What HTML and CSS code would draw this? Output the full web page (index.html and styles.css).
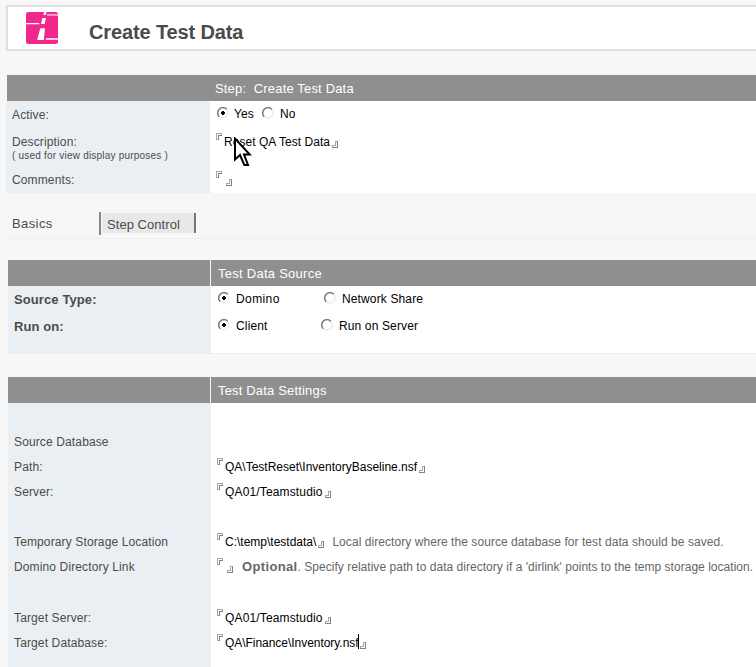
FILE: index.html
```html
<!DOCTYPE html>
<html lang="en">
<head>
<meta charset="utf-8">
<title>Create Test Data</title>
<link rel="stylesheet" href="styles.css">
</head>
<body>
<svg class="defs" aria-hidden="true">
  <symbol id="open" viewBox="0 0 6 7"><path d="M0 0H6V1H1V7H0Z" fill="#a8a8a8"/><path d="M2 2H6V3H3V7H2Z" fill="#808080"/><path d="M5 1H6V2H5ZM1 6H2V7H1Z" fill="#a8a8a8"/></symbol>
  <symbol id="close" viewBox="0 0 6 7"><path d="M3 0H4V5H0V4H3Z" fill="#a8a8a8"/><path d="M5 0H6V7H0V6H5Z" fill="#808080"/><path d="M4 0H5V1H4ZM0 5H1V6H0Z" fill="#a8a8a8"/></symbol>
  <symbol id="radio" viewBox="0 0 12 12"><circle cx="6" cy="6" r="5" fill="#fff" stroke="#e2e2e2"/><path d="M2.2 9.8A5.3 5.3 0 0 1 9.8 2.2" fill="none" stroke="#777" stroke-width="1.4"/></symbol>
  <symbol id="radio-on" viewBox="0 0 12 12"><use href="#radio"/><path d="M5 4H7V5H8V7H7V8H5V7H4V5H5Z" fill="#000"/></symbol>
</svg>

<header class="banner">
  <svg class="logo" viewBox="0 0 32 32"><rect width="32" height="32" rx="2.5" fill="#f0288c"/><path d="M18.2 0H20.6L19.7 3H17.4ZM16.5 6H20L18.6 12H15ZM14.3 16.3H19L17.8 28H11.2Z" fill="#fff"/><path d="M0 11H13.3V12.3H0ZM20 26.3H32V27.8H19.7Z" fill="#fff"/><path d="M21 2H32V3.8H21Z" fill="#f9a5cf"/></svg>
  <h1>Create Test Data</h1>
</header>

<section class="panel step">
  <div class="head"></div><div class="head title"><span class="t-step">Step:&nbsp; Create Test Data</span></div>
  <div class="labels">
    <div class="row r-active">Active:</div>
    <div class="row r-desc">Description:</div>
    <div class="row r-hint">( used for view display purposes )</div>
    <div class="row r-comm">Comments:</div>
  </div>
  <div class="values">
    <div class="radios"><svg class="radio"><use href="#radio-on"/></svg><span class="yes">Yes</span><svg class="radio"><use href="#radio"/></svg><span class="no">No</span></div>
    <div class="field v-desc"><svg class="open"><use href="#open"/></svg><span class="t-reset">Reset QA Test Data</span><svg class="close"><use href="#close"/></svg></div>
    <div class="field v-comm"><svg class="open"><use href="#open"/></svg><svg class="close"><use href="#close"/></svg></div>
  </div>
</section>

<nav class="tabs"><span class="basics">Basics</span><span class="edge"></span><span class="control">Step Control</span></nav>

<section class="panel source">
  <div class="head"></div><div class="head title"><span class="t-source">Test Data Source</span></div>
  <div class="labels bold">
    <div class="row">Source Type:</div>
    <div class="row">Run on:</div>
  </div>
  <div class="values">
    <div class="radios"><svg class="radio"><use href="#radio-on"/></svg><span class="first">Domino</span><svg class="radio"><use href="#radio"/></svg><span class="choice">Network Share</span></div>
    <div class="radios"><svg class="radio"><use href="#radio-on"/></svg><span class="first second">Client</span><svg class="radio"><use href="#radio"/></svg><span class="choice">Run on Server</span></div>
  </div>
</section>

<section class="panel settings">
  <div class="head"></div><div class="head title"><span class="t-settings">Test Data Settings</span></div>
  <div class="labels">
    <div class="row">Source Database</div>
    <div class="row">Path:</div>
    <div class="row">Server:</div>
    <div class="row gap">Temporary Storage Location</div>
    <div class="row">Domino Directory Link</div>
    <div class="row gap more">Target Server:</div>
    <div class="row">Target Database:</div>
  </div>
  <div class="values">
    <div class="field after"><svg class="open"><use href="#open"/></svg><span class="t-path">QA\TestReset\InventoryBaseline.nsf</span><svg class="close"><use href="#close"/></svg></div>
    <div class="field"><svg class="open"><use href="#open"/></svg><span class="t-qa">QA01/Teamstudio</span><svg class="close"><use href="#close"/></svg></div>
    <div class="field gap"><svg class="open"><use href="#open"/></svg><span class="t-temp">C:\temp\testdata\</span><svg class="close"><use href="#close"/></svg><span class="note t-local">Local directory where the source database for test data should be saved.</span></div>
    <div class="field"><svg class="open"><use href="#open"/></svg><svg class="close"><use href="#close"/></svg><span class="note t-opt"><b>Optional</b>. Specify relative path to data directory if a 'dirlink' points to the temp storage location.</span></div>
    <div class="field gap more"><svg class="open"><use href="#open"/></svg><span class="t-qa">QA01/Teamstudio</span><svg class="close"><use href="#close"/></svg></div>
    <div class="field"><svg class="open"><use href="#open"/></svg><span class="t-inv">QA\Finance\Inventory.nsf</span><i class="caret"></i><svg class="close"><use href="#close"/></svg></div>
  </div>
</section>

<svg class="cursor" viewBox="0 0 18 30"><path d="M1 1.5V22.5L6 18L10.3 28H14L10 17.5H15.8Z" fill="#fff" stroke="#000" stroke-width="2"/></svg>
</body>
</html>
```

FILE: styles.css
```css
* { box-sizing: border-box; }
html, body { height: 667px; overflow: hidden; }
body { margin: 0; padding: 5px 0 0 7px; background: #f7f7f7; color: #4b4b4b; font: 12px/25px "Liberation Sans", Arial, sans-serif; white-space: nowrap; }
svg { display: block; flex: none; }
.defs { position: absolute; width: 0; height: 0; }

.banner { display: flex; height: 46px; margin-left: -1px; border: 2px solid #dfdfdf; border-right: 0; background: #fff; }
.logo { width: 32px; height: 32px; margin: 5px 31px 0 18px; }
h1 { margin: 0; padding-top: 12px; font-size: 20px; line-height: 26px; letter-spacing: -.13px; }

.panel { display: grid; grid-template-columns: 203px 1fr; grid-template-rows: 26px 1fr; }
.head { background: #8f8f8f; }
.title { color: #fff; font-size: 13px; line-height: 27px; padding-left: 5px; }
.t-step, .t-settings { letter-spacing: .17px; }
.t-source { letter-spacing: .26px; }
.labels { background: #eaeff3; letter-spacing: .13px; }
.values { background: #fff; color: #000; }
.row { height: 25px; }

.step { height: 118px; margin-top: 24px; border-bottom: 1px solid #eee; }
.step .labels { margin-left: -1px; padding-left: 6px; }
.step .row { height: auto; }
.r-active { padding-top: 1px; line-height: 27px; }
.r-desc { line-height: 26px; }
.step .r-hint { font-size: 10px; line-height: 12px; margin-top: -5px; letter-spacing: .21px; }
.r-comm { padding-top: 6px; }

.radios { display: flex; height: 27px; line-height: 27px; padding-left: 7px; letter-spacing: .13px; }
.radio { width: 12px; height: 12px; margin-top: 6px; }
.yes { width: 28px; margin-left: 5px; }
.no { margin-left: 6px; }
.field { display: flex; height: 25px; line-height: 27px; padding-left: 6px; }
.open { width: 6px; height: 7px; margin: 4px 2px 0 0; }
.close { width: 6px; height: 7px; margin: 12px 0 0 2px; }
.v-desc { margin-top: 1px; }
.t-reset { letter-spacing: .05px; }
.v-comm { margin-top: 13px; }

.tabs { display: flex; height: 46px; margin-left: 1px; border-bottom: 1px solid #eee; font-size: 13px; }
.basics { width: 91px; padding: 18px 0 0 4px; letter-spacing: .4px; }
.edge { width: 2px; height: 23px; margin: 19px 1px 0 0; background: #888; }
.control { width: 94px; height: 20px; margin-top: 20px; padding-left: 5px; border-right: 2px solid #777; background: #e8e8e8; line-height: 23px; letter-spacing: .05px; }

.source, .settings { margin-left: 1px; column-gap: 1px; grid-template-columns: 202px 1fr; }
.source .title, .settings .title { padding-left: 7px; }
.source .labels, .settings .labels { margin-right: -1px; padding-left: 6px; }
.source { height: 94px; margin-top: 21px; border-bottom: 1px solid #eee; }
.source .bold { font-weight: bold; font-size: 13px; letter-spacing: .1px; }
.bold .row { height: 27px; line-height: 27px; }
.source .radios { line-height: 26px; }
.first { width: 88px; margin-left: 6px; letter-spacing: .4px; }
.second { width: 85px; letter-spacing: .15px; }
.choice { margin-left: 6px; }

.settings { height: 290px; margin-top: 23px; }
.settings .labels { padding-top: 27px; }
.gap { margin-top: 25px; }
.more { margin-top: 26px; }
.after { margin-top: 51px; }
.t-qa { letter-spacing: .15px; }
.t-inv { letter-spacing: -.04px; }
.note { color: #666; margin-left: 9px; }
.t-local { margin-left: 8px; letter-spacing: .06px; }
.t-opt { letter-spacing: .03px; }
.t-opt b { font-size: 13px; line-height: 1; letter-spacing: .35px; }
.caret { width: 1px; height: 15px; margin: 4px -1px 0 -1px; background: #000; }
.cursor { position: absolute; left: 234px; top: 137px; width: 18px; height: 30px; }
```
